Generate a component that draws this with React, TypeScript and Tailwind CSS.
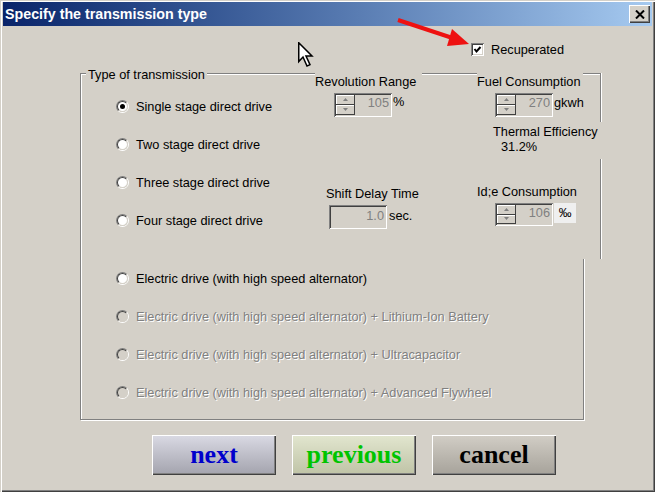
import React from "react";

const raised =
  "shadow-[inset_1px_1px_0_#fff,inset_-1px_-1px_0_#404040,inset_-2px_-2px_0_#808080]";
const sunken =
  "shadow-[inset_1px_1px_0_#808080,inset_-1px_-1px_0_#fff,inset_2px_2px_0_#404040,inset_-2px_-2px_0_#d4d0c8]";

const Radio = ({ checked, disabled }: { checked?: boolean; disabled?: boolean }) => (
  <span className="w-[13px] h-[13px] shrink-0 rounded-full border border-t-[#808080] border-l-[#808080] border-b-white border-r-white">
    <span
      className={`flex w-full h-full items-center justify-center rounded-full border border-t-[#404040] border-l-[#404040] border-b-[#d4d0c8] border-r-[#d4d0c8] ${
        disabled ? "bg-[#d4d0c8]" : "bg-white"
      }`}
    >
      {checked && <span className="w-[5px] h-[5px] rounded-full bg-black" />}
    </span>
  </span>
);

const RadioRow = ({
  label,
  checked,
  disabled,
}: {
  label: string;
  checked?: boolean;
  disabled?: boolean;
}) => (
  <div className="h-[38px] flex items-center gap-[7px] pl-[35px]">
    <Radio checked={checked} disabled={disabled} />
    <span
      className={`whitespace-nowrap leading-[15px] ${
        disabled ? "text-[#808080] [text-shadow:1px_1px_0_#fff]" : ""
      }`}
    >
      {label}
    </span>
  </div>
);

const Tri = ({ up }: { up?: boolean }) => (
  <svg width="5" height="3" viewBox="0 0 5 3">
    <path d={up ? "M2.5 0 L5 3 L0 3 Z" : "M0 0 L5 0 L2.5 3 Z"} fill="#808080" />
  </svg>
);

const Spin = ({ value }: { value: string }) => (
  <div className={`flex w-[58px] h-full p-[2px] ${sunken}`}>
    <div className="flex flex-col w-[19px]">
      <div className="flex-1 flex items-center justify-center border-r border-b border-[#404040] shadow-[inset_1px_1px_0_#fff]">
        <Tri up />
      </div>
      <div className="flex-1 flex items-center justify-center border-r border-b border-[#404040] shadow-[inset_1px_1px_0_#fff]">
        <Tri />
      </div>
    </div>
    <div className="flex-1 text-right pr-[1px] text-[#808080] leading-[15px]">{value}</div>
  </div>
);

const BigButton = ({ label, cls }: { label: string; cls: string }) => (
  <button
    type="button"
    className={`w-[124px] h-[40px] bg-linear-to-b ${cls} ${raised} font-['Liberation_Serif',serif] font-bold text-[26px] leading-none`}
  >
    {label}
  </button>
);

export default function App() {
  return (
    <div className="relative w-[655px] h-[492px] overflow-hidden bg-[#d4d0c8] px-[3px] pt-[2px] font-['Liberation_Sans',Arial,sans-serif] text-[12.75px] text-black shadow-[inset_1px_1px_0_#d4d0c8,inset_2px_2px_0_#fff,inset_-1px_-1px_0_#404040,inset_-2px_-2px_0_#808080]">
      {/* title bar */}
      <div className="h-[24px] flex items-center bg-linear-to-r from-[#0a246a] to-[#a6caf0] pl-[2px] pr-[2px]">
        <span className="flex-1 text-white font-bold text-[14.25px] leading-none">
          Specify the transmission type
        </span>
        <div className={`w-[21px] h-[18px] flex items-center justify-center bg-[#d4d0c8] ${raised}`}>
          <svg width="10" height="9" viewBox="0 0 10 9">
            <path d="M1 0.5 L9 8.5 M9 0.5 L1 8.5" stroke="#000" strokeWidth="2" />
          </svg>
        </div>
      </div>

      {/* recuperated */}
      <div className="mt-[17px] ml-[468px] h-[13px] flex items-center gap-[7px]">
        <div className={`w-[13px] h-[13px] bg-white flex items-center justify-center ${sunken}`}>
          <svg width="9" height="9" viewBox="0 0 9 9">
            <path d="M1.5 4 L3.5 6.5 L7.5 2" stroke="#000" strokeWidth="2" fill="none" />
          </svg>
        </div>
        <span className="leading-[15px]">Recuperated</span>
      </div>

      {/* type of transmission frame */}
      <div className="mt-[17px] ml-[77px] w-[504px] h-[347px] flex border border-[#808080] shadow-[inset_1px_1px_0_#fff,1px_1px_0_#fff]">
        <div className="w-[234px] flex flex-col items-start">
          <span className="-mt-[7px] ml-[5px] px-[2px] bg-[#d4d0c8] leading-[15px]">Type of transmission</span>
          <div className="mt-[5px] w-full">
            <RadioRow label="Single stage direct drive" checked />
            <RadioRow label="Two stage direct drive" />
            <RadioRow label="Three stage direct drive" />
            <RadioRow label="Four stage direct drive" />
          </div>
          <div className="mt-[20px] w-full">
            <RadioRow label="Electric drive (with high speed alternator)" />
            <RadioRow label="Electric drive (with high speed alternator) + Lithium-Ion Battery" disabled />
            <RadioRow label="Electric drive (with high speed alternator) + Ultracapacitor" disabled />
            <RadioRow label="Electric drive (with high speed alternator) + Advanced Flywheel" disabled />
          </div>
        </div>

        {/* parameters panel */}
        <div className="-mt-[1px] -mr-[18px] w-[286px] h-[186px] flex flex-col bg-[#d4d0c8] border-r border-[#808080] shadow-[1px_0_0_#fff]">
          <div className="h-[17px] flex items-start">
            <span className="w-[107px] leading-[17px] whitespace-nowrap">Revolution Range</span>
            <span className="w-[55px] h-[2px] border-t border-b border-t-[#808080] border-b-white" />
            <span className="w-[106px] leading-[17px] whitespace-nowrap">Fuel Consumption</span>
            <span className="w-[17px] h-[2px] border-t border-b border-t-[#808080] border-b-white" />
          </div>
          <div className="flex">
            <div className="w-[162px] flex flex-col">
              <div className="mt-[3px] h-[24px] flex items-start pl-[19px]">
                <Spin value="105" />
                <span className="ml-[1px] leading-[17px]">%</span>
              </div>
              <span className="mt-[69px] pl-[11px] leading-[15px] whitespace-nowrap">Shift Delay Time</span>
              <div className="mt-[4px] h-[24px] flex items-start pl-[14px]">
                <div className={`w-[58px] h-full p-[2px] text-right pr-[3px] text-[#808080] leading-[18px] ${sunken}`}>
                  1.0
                </div>
                <span className="ml-[2px] leading-[22px]">sec.</span>
              </div>
            </div>
            <div className="w-[123px] flex flex-col">
              <div className="mt-[3px] h-[24px] flex items-start pl-[18px]">
                <Spin value="270" />
                <span className="ml-[1px] leading-[20px]">gkwh</span>
              </div>
              <div className="mt-[5px] ml-[16px] w-[109px] h-[37px] pt-[2px] bg-[#d4d0c8] leading-[15px] whitespace-nowrap">
                <div>Thermal Efficiency</div>
                <div className="pl-[8px]">31.2%</div>
              </div>
              <span className="mt-[25px] leading-[15px] whitespace-nowrap">Id;e Consumption</span>
              <div className="mt-[4px] h-[23px] flex items-start pl-[18px]">
                <Spin value="106" />
                <span className="ml-[1px] w-[22px] h-[20px] bg-[#efefef] flex items-center justify-center">‰</span>
              </div>
            </div>
          </div>
        </div>
      </div>

      {/* buttons */}
      <div className="mt-[15px] ml-[149px] flex gap-[16px]">
        <BigButton label="next" cls="from-[#dadae4] to-[#a3a3ad] text-[#0000cc]" />
        <BigButton label="previous" cls="from-[#e2e6cf] to-[#bfc3a6] text-[#00c400]" />
        <BigButton label="cancel" cls="from-[#d2cec6] to-[#a6a29a] text-black" />
      </div>

      {/* annotation arrow */}
      <svg className="absolute left-0 top-0 pointer-events-none" width="655" height="80">
        <line x1="398" y1="20" x2="454" y2="38.5" stroke="#ee1111" strokeWidth="4" />
        <polygon points="469,44 452,29 447,46" fill="#ee1111" />
      </svg>

      {/* mouse cursor */}
      <svg className="absolute left-[298px] top-[42px] pointer-events-none" width="16" height="26" viewBox="0 0 16 26">
        <path
          d="M0.75 0.75 L0.75 19.5 L5 15 L9 24 L12 22.6 L8 14 L14 14 Z"
          fill="#fff"
          stroke="#000"
          strokeWidth="1.5"
          strokeLinejoin="miter"
        />
      </svg>
    </div>
  );
}
